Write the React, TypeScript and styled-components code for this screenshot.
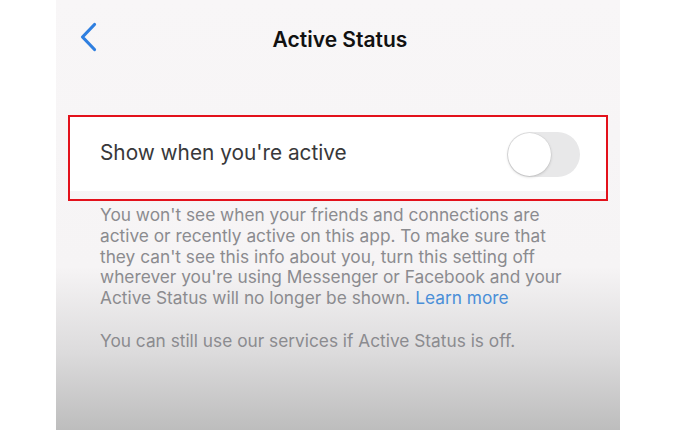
import styled, { createGlobalStyle } from "styled-components";

const GlobalStyle = createGlobalStyle`
  html, body {
    margin: 0;
    padding: 0;
    background: #ffffff;
  }
`;

const Page = styled.div`
  width: 700px;
  height: 430px;
  display: flex;
  background: #ffffff;
  overflow: hidden;
`;

const Screen = styled.div`
  margin-left: 56px;
  width: 564px;
  height: 430px;
  display: flex;
  flex-direction: column;
  background: linear-gradient(
    to bottom,
    #f8f6f7 0%,
    #f6f4f5 62%,
    #dcdbdc 82%,
    #bdbdbd 100%
  );
  font-family: Inter, "Liberation Sans", Arial, sans-serif;
`;

const Header = styled.div`
  height: 80px;
  display: flex;
  align-items: center;
  position: relative;
  justify-content: center;
`;

const BackButton = styled.div`
  position: absolute;
  left: 22px;
  top: 22px;
  width: 24px;
  height: 32px;
  display: flex;
  align-items: center;
`;

const Title = styled.h1`
  margin: 0 0 2px 4px;
  font-size: 21px;
  font-weight: 600;
  color: #111111;
`;

const Highlight = styled.div`
  margin: 35px 0 0 12px;
  width: 540px;
  height: 86px;
  box-sizing: border-box;
  border: 2px solid #e3111b;
  display: flex;
  flex-direction: column;
`;

const Row = styled.div`
  height: 74px;
  background: #ffffff;
  display: flex;
  align-items: center;
  justify-content: space-between;
  padding: 0 26px 0 30px;
`;

const RowLabel = styled.span`
  font-size: 20.8px;
  color: #38383a;
  margin-bottom: 3px;
`;

const Track = styled.div<{ on?: boolean }>`
  width: 73px;
  height: 45px;
  border-radius: 23px;
  background: ${(p) => (p.on ? "#34c759" : "#e8e8e9")};
  display: flex;
  align-items: center;
  padding: 1px;
  box-sizing: border-box;
`;

const Knob = styled.div`
  width: 43px;
  height: 43px;
  border-radius: 50%;
  background: #ffffff;
  box-shadow: 0 1px 3px rgba(0, 0, 0, 0.18), 0 0 0 0.5px rgba(0, 0, 0, 0.06);
`;

const Notes = styled.div`
  padding: 4px 10px 0 44px;
  display: flex;
  flex-direction: column;
  gap: 22px;
`;

const Note = styled.p`
  margin: 0;
  font-size: 17.3px;
  line-height: 20.8px;
  color: #8b8b8f;
  white-space: nowrap;
`;

const Link = styled.span`
  color: #4a8fd8;
`;

const Chevron = () => (
  <svg width="24" height="32" viewBox="0 0 24 32" fill="none">
    <path
      d="M16.5 2.5 L4.5 15 L16.5 27.5"
      stroke="#2f7fe0"
      strokeWidth="3.2"
      strokeLinecap="round"
      strokeLinejoin="round"
    />
  </svg>
);

const App = () => {
  return (
    <>
      <GlobalStyle />
      <Page>
        <Screen>
          <Header>
            <BackButton>
              <Chevron />
            </BackButton>
            <Title>Active Status</Title>
          </Header>
          <Highlight>
            <Row>
              <RowLabel>Show when you're active</RowLabel>
              <Track>
                <Knob />
              </Track>
            </Row>
          </Highlight>
          <Notes>
            <Note>
              You won't see when your friends and connections are
              <br />
              active or recently active on this app. To make sure that
              <br />
              they can't see this info about you, turn this setting off
              <br />
              wherever you're using Messenger or Facebook and your
              <br />
              Active Status will no longer be shown. <Link>Learn more</Link>
            </Note>
            <Note>You can still use our services if Active Status is off.</Note>
          </Notes>
        </Screen>
      </Page>
    </>
  );
};

export default App;
